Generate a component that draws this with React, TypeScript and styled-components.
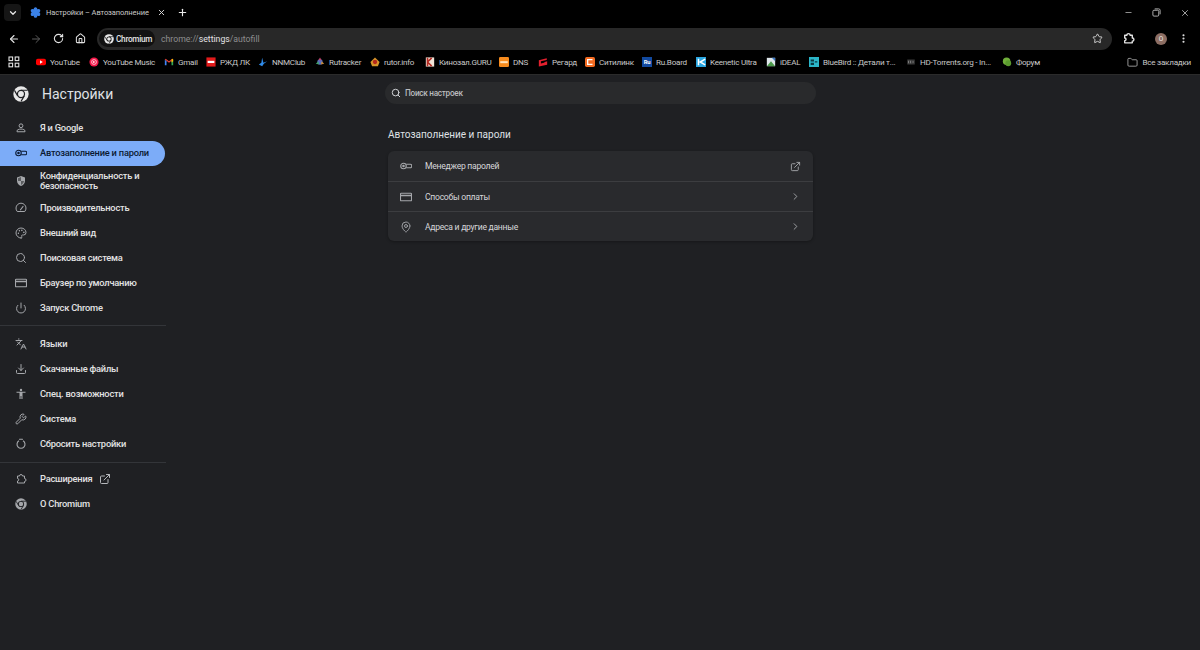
import React from "react";
import styled, { createGlobalStyle } from "styled-components";
import {
	ArrowLeft,
	ArrowRight,
	ChevronDown,
	ChevronRight,
	Download,
	EllipsisVertical,
	ExternalLink,
	Folder,
	House,
	Languages,
	MapPin,
	Minus,
	Palette,
	Plus,
	Power,
	RotateCw,
	Search,
	Settings,
	Star,
	Wrench,
	X,
} from "lucide-react";

const GlobalStyle = createGlobalStyle`
	html, body {
		margin: 0;
		padding: 0;
		width: 1200px;
		height: 650px;
		overflow: hidden;
		background: #1f2023;
	}
	* {
		box-sizing: border-box;
	}
`;

const Page = styled.div`
	width: 1200px;
	height: 650px;
	display: flex;
	flex-direction: column;
	font-family: Roboto, "Liberation Sans", sans-serif;
	background: #1f2023;
	color: #e3e3e3;
`;

const TabStrip = styled.div`
	height: 25px;
	flex: none;
	display: flex;
	align-items: center;
	background: #000;
	padding-left: 4px;
`;

const TabSearch = styled.div`
	width: 17px;
	height: 17px;
	border-radius: 4px;
	background: #161616;
	display: flex;
	align-items: center;
	justify-content: center;
	color: #e8e8e8;
`;

const Tab = styled.div`
	width: 147px;
	margin-left: 8px;
	padding-left: 1px;
	display: flex;
	align-items: center;
	color: #dcdcdc;
`;

const TabTitle = styled.span`
	width: 103px;
	margin-left: 5px;
	margin-right: 8px;
	font-size: 7.5px;
	letter-spacing: -0.1px;
	white-space: nowrap;
	color: #c9c9c9;
`;

const NewTab = styled.div`
	margin-left: 1px;
	display: flex;
	color: #e8e8e8;
`;

const WindowControls = styled.div`
	margin-left: auto;
	display: flex;
	align-items: center;
	gap: 19px;
	padding-right: 10px;
	color: #bdbdbd;
`;

const Toolbar = styled.div`
	height: 27px;
	flex: none;
	display: flex;
	align-items: center;
	background: #000;
	padding-left: 8px;
`;

const NavButton = styled.div<{ $dim?: boolean }>`
	width: 12px;
	margin-right: 10px;
	display: flex;
	justify-content: center;
	color: ${p => (p.$dim ? "#5c5c5c" : "#e3e3e3")};
`;

const AddressBar = styled.div`
	width: 1015px;
	height: 22px;
	margin-left: 1px;
	border-radius: 11px;
	background: #282828;
	display: flex;
	align-items: center;
	padding: 0 9px 0 2px;
`;

const SiteChip = styled.div`
	height: 17px;
	width: 56px;
	border-radius: 9px;
	background: #111;
	display: flex;
	align-items: center;
	gap: 2px;
	padding-left: 5px;
	font-size: 8.2px;
	letter-spacing: -0.25px;
	font-weight: 500;
	color: #e3e3e3;
`;

const Url = styled.span`
	margin-left: 6px;
	font-size: 8.7px;
	color: #8e8e8e;

	b {
		font-weight: 400;
		color: #e3e3e3;
	}
`;

const BarStar = styled.div`
	margin-left: auto;
	display: flex;
	color: #d6d6d6;
`;

const ToolbarEnd = styled.div`
	display: flex;
	align-items: center;
	margin-left: 10px;
	color: #e3e3e3;
`;

const Avatar = styled.div`
	width: 12px;
	height: 12px;
	margin: 0 11px 0 20px;
	border-radius: 50%;
	background: #8d6e63;
	color: #eee;
	font-size: 6.5px;
	display: flex;
	align-items: center;
	justify-content: center;
`;

const BookmarkBar = styled.div`
	height: 23px;
	flex: none;
	display: flex;
	align-items: center;
	background: #000;
	border-bottom: 1px solid #2b2b2b;
	padding: 0 9px 2px 8px;
`;

const AppsIcon = styled.div`
	width: 28px;
	display: flex;
	color: #e3e3e3;
`;

const Bookmark = styled.div<{ $width: number }>`
	width: ${p => p.$width}px;
	flex: none;
	display: flex;
	align-items: center;
	gap: 4px;
	font-size: 8.1px;
	letter-spacing: -0.25px;
	color: #c9c9c9;
	white-space: nowrap;
`;

const AllBookmarks = styled.div`
	margin-left: auto;
	display: flex;
	align-items: center;
	gap: 5px;
	font-size: 8.1px;
	letter-spacing: -0.25px;
	color: #c9c9c9;
`;

const Body = styled.div`
	flex: 1;
	display: flex;
	min-height: 0;
`;

const Sidebar = styled.nav`
	width: 166px;
	flex: none;
	display: flex;
	flex-direction: column;
`;

const Brand = styled.div`
	height: 40px;
	display: flex;
	align-items: center;
	gap: 13px;
	padding-left: 13px;
	margin-top: -1.5px;
	margin-bottom: 2px;
	font-size: 14px;
	color: #dfe1e5;
`;

const NavItem = styled.div<{ $active?: boolean; $tall?: boolean }>`
	height: ${p => (p.$tall ? "30px" : "25px")};
	width: 165px;
	display: flex;
	align-items: center;
	gap: 13px;
	padding-left: 15px;
	border-radius: 0 13px 13px 0;
	font-size: 9.3px;
	letter-spacing: -0.22px;
	font-weight: 500;
	line-height: 9.5px;
	color: ${p => (p.$active ? "#0b1a33" : "#e3e3e3")};
	background: ${p => (p.$active ? "#7cacf8" : "transparent")};

	svg {
		flex: none;
		color: ${p => (p.$active ? "#0b1a33" : "#a5a7ab")};
	}
`;

const NavDivider = styled.div<{ $tight?: boolean }>`
	height: 1px;
	background: #333539;
	margin: ${p => (p.$tight ? "5px 0 4px" : "4px 0 6px")};
	width: 166px;
`;

const NavGroup = styled.div`
	display: flex;
	flex-direction: column;
`;

const LinkMark = styled.span`
	display: flex;
	margin-left: -6px;

	svg {
		color: #b5b7bb;
	}
`;

const Content = styled.main`
	flex: 1;
	padding: 7px 0 0 219px;
`;

const SearchField = styled.div`
	width: 431px;
	height: 22px;
	border-radius: 11px;
	background: #292a2c;
	display: flex;
	align-items: center;
	gap: 4px;
	padding-left: 6px;
	font-size: 8.2px;
	letter-spacing: -0.28px;
	font-weight: 500;
	color: #b9bbbe;

	svg {
		color: #d0d2d5;
	}
`;

const SectionTitle = styled.h2`
	margin: 25px 0 10px 3px;
	font-size: 10px;
	line-height: 12px;
	font-weight: 400;
	color: #dfe1e5;
`;

const Card = styled.section`
	width: 425px;
	margin-left: 3px;
	border-radius: 6px;
	background: #292a2d;
	box-shadow: 0 1px 3px rgba(0, 0, 0, 0.3);
`;

const Row = styled.div`
	height: 30px;
	display: flex;
	align-items: center;
	padding: 0 12px;
	font-size: 8.6px;
	letter-spacing: -0.27px;
	color: #d6d7da;

	& + & {
		border-top: 1px solid #3c3d40;
	}

	svg {
		flex: none;
		color: #a5a7ab;
	}
`;

const RowLabel = styled.span`
	margin-left: 13px;
	flex: 1;
`;

const ChromeLogo: React.FC<{ size: number; color?: string; bg?: string }> = ({
	size,
	color = "#e8e8e8",
	bg = "#1f2023",
}) => (
	<svg width={size} height={size} viewBox="0 0 24 24">
		<circle cx="12" cy="12" r="11.5" fill={color} />
		<circle cx="12" cy="12" r="6.2" fill={bg} />
		<circle cx="12" cy="12" r="4.4" fill={color} />
		<path d="M12 6.4h10M7 14.8 2.2 6.6M17 14.8 12 23" stroke={bg} strokeWidth="1.7" fill="none" />
	</svg>
);

const KeyIcon: React.FC = () => (
	<svg width="12" height="12" viewBox="0 0 24 24" fill="none" stroke="currentColor" strokeWidth="2.2">
		<circle cx="7" cy="12" r="5.5" />
		<circle cx="7" cy="12" r="1.4" fill="currentColor" />
		<path d="M12.5 8.5h8a3 3 0 0 1 3 3v1a3 3 0 0 1-3 3h-8" />
	</svg>
);

const WindowIcon: React.FC = () => (
	<svg width="12" height="12" viewBox="0 0 24 24" fill="none" stroke="currentColor" strokeWidth="2.2">
		<rect x="1" y="4.5" width="22" height="15" rx="1.5" />
		<path d="M1 9h22" strokeWidth="3" />
	</svg>
);

const PersonIcon: React.FC = () => (
	<svg width="12" height="12" viewBox="0 0 24 24" fill="none" stroke="currentColor" strokeWidth="2">
		<circle cx="12" cy="7.5" r="3.8" />
		<path d="M4 19.5v-1.3c0-1.5.8-2.4 2.2-3 3.6-1.4 8-1.4 11.6 0 1.4.6 2.2 1.5 2.2 3v1.3z" />
	</svg>
);

const ShieldIcon: React.FC = () => (
	<svg width="12" height="12" viewBox="0 0 24 24" fill="none">
		<path d="M12 2 4 5v6.5c0 4.8 3.3 8.8 8 10.5 4.7-1.7 8-5.7 8-10.5V5z" fill="currentColor" />
		<path d="M12 4.2 6 6.4V12h6zM12 12v7.8c3.3-1.4 5.8-4.4 6-7.8z" fill="#1f2023" opacity=".55" />
	</svg>
);

const SpeedIcon: React.FC = () => (
	<svg width="12" height="12" viewBox="0 0 24 24" fill="none" stroke="currentColor" strokeWidth="2">
		<path d="M4.5 19a10 10 0 1 1 15 0z" strokeLinejoin="round" />
		<path d="M11 15.5 16 9" strokeWidth="2.4" strokeLinecap="round" />
	</svg>
);

const AccessIcon: React.FC = () => (
	<svg width="12" height="12" viewBox="0 0 24 24" fill="currentColor">
		<circle cx="12" cy="4" r="2.4" />
		<path d="M3 7.5h18v2.2h-6V22h-2.2v-6h-1.6v6H9V9.7H3z" />
	</svg>
);

const ResetIcon: React.FC = () => (
	<svg width="12" height="12" viewBox="0 0 24 24" fill="none" stroke="currentColor" strokeWidth="2.2">
		<path d="M8 5.6a8 8 0 1 0 8 0" />
		<path d="M9 2.5h6" strokeLinecap="round" />
	</svg>
);

const PuzzleIcon: React.FC<{ size: number; width?: number }> = ({ size, width = 2 }) => (
	<svg width={size} height={size} viewBox="0 0 24 24" fill="none" stroke="currentColor" strokeWidth={width}>
		<path d="M5 6h4a3 3 0 0 1 6 0h4v5a3 3 0 0 1 0 6v3H5v-4a2.5 2.5 0 0 0 0-5z" strokeLinejoin="round" />
	</svg>
);

const GridIcon: React.FC = () => (
	<svg width="12" height="12" viewBox="0 0 12 12" fill="none" stroke="currentColor" strokeWidth="1.1">
		<rect x="1" y="1" width="3.6" height="3.6" />
		<rect x="7.2" y="1" width="3.6" height="3.6" />
		<rect x="1" y="7.2" width="3.6" height="3.6" />
		<rect x="7.2" y="7.2" width="3.6" height="3.6" />
	</svg>
);

const RestoreIcon: React.FC = () => (
	<svg width="9" height="9" viewBox="0 0 10 10" fill="none" stroke="currentColor" strokeWidth="1">
		<rect x="1" y="2.5" width="6.5" height="6.5" rx="1.2" />
		<path d="M3 1h4.5A1.5 1.5 0 0 1 9 2.5V7" />
	</svg>
);

const favicons: Record<string, React.ReactNode> = {
	youtube: (
		<>
			<rect y="2" width="12" height="8" rx="2.2" fill="#f00" />
			<path d="M4.8 4v4L8.2 6z" fill="#fff" />
		</>
	),
	music: (
		<>
			<circle cx="6" cy="6" r="5.5" fill="#f5184a" />
			<circle cx="6" cy="6" r="2.9" fill="none" stroke="#fff" strokeWidth=".8" />
			<path d="M5 4.6v2.8L7.4 6z" fill="#fff" />
		</>
	),
	gmail: (
		<>
			<path d="M1 3v7h2V5z" fill="#4285f4" />
			<path d="M11 3v7H9V5z" fill="#34a853" />
			<path d="M1 3l5 4 5-4-1-1-4 3-4-3z" fill="#ea4335" />
			<path d="M10 2l1 1v2L9 6.5V3z" fill="#fbbc04" />
		</>
	),
	rzd: (
		<>
			<rect x="0.5" y="0.5" width="11" height="11" fill="#e21a1a" />
			<rect x="2" y="4.6" width="8" height="2.6" fill="#fff" />
		</>
	),
	nnm: <path d="M1 9l3-2 1-6 1.5 6L11 5 7 8l-2 3z" fill="#2f8bea" />,
	rutracker: (
		<>
			<circle cx="6" cy="6" r="3.2" fill="#5a6fc0" />
			<path d="M6 0.5 8 4 4 4z" fill="#c0476c" />
			<path d="M1 8l3-3 1 4z" fill="#3fa06a" />
			<path d="M11 8 8 5 7 9z" fill="#c58a3a" />
		</>
	),
	rutor: (
		<>
			<path d="M6 .5 11.5 6 9.5 11h-7L.5 6z" fill="#d6942a" />
			<circle cx="6" cy="6" r="2.6" fill="#b6271d" />
		</>
	),
	kinozal: (
		<>
			<rect x="1" y="0.5" width="10" height="11" fill="#f1e4d8" />
			<path d="M3 1v10M3 6l5-5M3 6l5 5" stroke="#b32a22" strokeWidth="2" />
		</>
	),
	dns: (
		<>
			<rect width="12" height="12" rx="1.5" fill="#f68b1e" />
			<rect x="1.5" y="5" width="9" height="2.4" fill="#ffe2bb" />
		</>
	),
	regard: <path d="M1 4 10.5 1.5v2L3.5 5.2v2.6l5-1.2-1.5-.2 4-1.2v4L1 11.5z" fill="#e3202e" />,
	citilink: (
		<>
			<rect width="12" height="12" rx="2" fill="#f26a21" />
			<path d="M9 3.2H3.2v5.6H9" fill="none" stroke="#fff" strokeWidth="1.6" />
		</>
	),
	ruboard: (
		<>
			<rect width="12" height="12" fill="#124aa0" />
			<text x="6" y="8.6" textAnchor="middle" fontSize="7" fontWeight="700" fill="#fff">
				Ru
			</text>
		</>
	),
	keenetic: (
		<>
			<rect width="12" height="12" fill="#2aa6e0" />
			<path d="M3 2v8M11 2.5 5 6l6 3.5" fill="none" stroke="#fff" strokeWidth="1.8" />
		</>
	),
	ideal: (
		<>
			<rect x="1" y="1" width="10" height="10" fill="#dfe6ea" />
			<path d="M1 11 6 5l5 6z" fill="#4c9a4a" />
			<path d="M7 1h4v4z" fill="#3b78c4" />
		</>
	),
	bluebird: (
		<>
			<rect width="12" height="12" fill="#2bb5c8" />
			<path d="M2 3h4v2.5H2zM2 7h4v2.5H2zM7 5h3v1.5H7z" fill="#0b3a44" />
		</>
	),
	hd: (
		<>
			<rect x="1.5" y="3" width="9" height="6" fill="#3a3a3a" />
			<path d="M3 4.5v3M5.5 4.5v3M7.5 6h2" stroke="#8a8a8a" />
		</>
	),
	forum: (
		<>
			<circle cx="5.5" cy="5" r="4.5" fill="#6fae3a" />
			<circle cx="7.5" cy="7.5" r="3.5" fill="#5a9a2e" />
		</>
	),
};

const Favicon: React.FC<{ name: string }> = ({ name }) => (
	<svg width="10" height="10" viewBox="0 0 12 12" style={{ flex: "none" }}>
		{favicons[name]}
	</svg>
);

const bookmarks = [
	{ icon: "youtube", title: "YouTube", width: 53 },
	{ icon: "music", title: "YouTube Music", width: 75 },
	{ icon: "gmail", title: "Gmail", width: 42 },
	{ icon: "rzd", title: "РЖД ЛК", width: 52 },
	{ icon: "nnm", title: "NNMClub", width: 57 },
	{ icon: "rutracker", title: "Rutracker", width: 55 },
	{ icon: "rutor", title: "rutor.info", width: 55 },
	{ icon: "kinozal", title: "Кинозал.GURU", width: 74 },
	{ icon: "dns", title: "DNS", width: 39 },
	{ icon: "regard", title: "Регард", width: 47 },
	{ icon: "citilink", title: "Ситилинк", width: 57 },
	{ icon: "ruboard", title: "Ru.Board", width: 54 },
	{ icon: "keenetic", title: "Keenetic Ultra", width: 70 },
	{ icon: "ideal", title: "iDEAL", width: 43 },
	{ icon: "bluebird", title: "BlueBird :: Детали т...", width: 97 },
	{ icon: "hd", title: "HD-Torrents.org - In...", width: 96 },
	{ icon: "forum", title: "Форум", width: 46 },
];

const App: React.FC = () => (
	<Page>
		<GlobalStyle />
		<TabStrip>
			<TabSearch>
				<ChevronDown size={10} strokeWidth={3} />
			</TabSearch>
			<Tab>
				<Settings size={11} strokeWidth={3} color="#3b82e8" fill="#3b82e8" />
				<TabTitle>Настройки – Автозаполнение</TabTitle>
				<X size={9} strokeWidth={2.5} />
			</Tab>
			<NewTab>
				<Plus size={11} strokeWidth={2.5} />
			</NewTab>
			<WindowControls>
				<Minus size={9} />
				<RestoreIcon />
				<X size={10} />
			</WindowControls>
		</TabStrip>

		<Toolbar>
			<NavButton>
				<ArrowLeft size={12} strokeWidth={2.2} />
			</NavButton>
			<NavButton $dim>
				<ArrowRight size={12} strokeWidth={2} />
			</NavButton>
			<NavButton>
				<RotateCw size={11} strokeWidth={2.4} />
			</NavButton>
			<NavButton>
				<House size={11} strokeWidth={2.2} />
			</NavButton>
			<AddressBar>
				<SiteChip>
					<ChromeLogo size={10} bg="#111" />
					Chromium
				</SiteChip>
				<Url>
					chrome://<b>settings</b>/autofill
				</Url>
				<BarStar>
					<Star size={11} strokeWidth={2} />
				</BarStar>
			</AddressBar>
			<ToolbarEnd>
				<PuzzleIcon size={13} width={2.6} />
				<Avatar>O</Avatar>
				<EllipsisVertical size={11} strokeWidth={2.6} />
			</ToolbarEnd>
		</Toolbar>

		<BookmarkBar>
			<AppsIcon>
				<GridIcon />
			</AppsIcon>
			{bookmarks.map(b => (
				<Bookmark key={b.title} $width={b.width}>
					<Favicon name={b.icon} />
					{b.title}
				</Bookmark>
			))}
			<AllBookmarks>
				<Folder size={11} strokeWidth={1.6} />
				Все закладки
			</AllBookmarks>
		</BookmarkBar>

		<Body>
			<Sidebar>
				<Brand>
					<ChromeLogo size={16} />
					Настройки
				</Brand>
				<NavGroup>
					<NavItem>
						<PersonIcon />Я и Google
					</NavItem>
					<NavItem $active>
						<KeyIcon />
						Автозаполнение и пароли
					</NavItem>
					<NavItem $tall>
						<ShieldIcon />
						<span>
							Конфиденциальность и
							<br />
							безопасность
						</span>
					</NavItem>
					<NavItem>
						<SpeedIcon />
						Производительность
					</NavItem>
					<NavItem>
						<Palette size={12} />
						Внешний вид
					</NavItem>
					<NavItem>
						<Search size={12} />
						Поисковая система
					</NavItem>
					<NavItem>
						<WindowIcon />
						Браузер по умолчанию
					</NavItem>
					<NavItem>
						<Power size={12} />
						Запуск Chrome
					</NavItem>
				</NavGroup>
				<NavDivider />
				<NavGroup>
					<NavItem>
						<Languages size={12} />
						Языки
					</NavItem>
					<NavItem>
						<Download size={12} />
						Скачанные файлы
					</NavItem>
					<NavItem>
						<AccessIcon />
						Спец. возможности
					</NavItem>
					<NavItem>
						<Wrench size={12} />
						Система
					</NavItem>
					<NavItem>
						<ResetIcon />
						Сбросить настройки
					</NavItem>
				</NavGroup>
				<NavDivider $tight />
				<NavGroup>
					<NavItem>
						<PuzzleIcon size={12} />
						Расширения
						<LinkMark>
							<ExternalLink size={12} />
						</LinkMark>
					</NavItem>
					<NavItem>
						<ChromeLogo size={12} color="#a5a7ab" />
						О Chromium
					</NavItem>
				</NavGroup>
			</Sidebar>

			<Content>
				<SearchField>
					<Search size={10} strokeWidth={2.4} />
					Поиск настроек
				</SearchField>
				<SectionTitle>Автозаполнение и пароли</SectionTitle>
				<Card>
					<Row>
						<KeyIcon />
						<RowLabel>Менеджер паролей</RowLabel>
						<ExternalLink size={11} />
					</Row>
					<Row>
						<WindowIcon />
						<RowLabel>Способы оплаты</RowLabel>
						<ChevronRight size={11} />
					</Row>
					<Row>
						<MapPin size={12} strokeWidth={1.8} />
						<RowLabel>Адреса и другие данные</RowLabel>
						<ChevronRight size={11} />
					</Row>
				</Card>
			</Content>
		</Body>
	</Page>
);

export default App;
